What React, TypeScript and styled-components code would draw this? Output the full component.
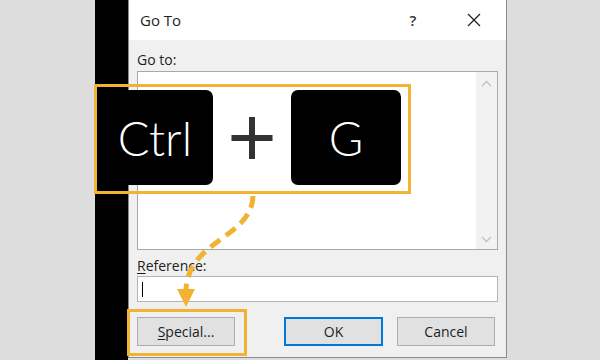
import React from "react";
import styled, { createGlobalStyle } from "styled-components";

const Global = createGlobalStyle`
  html, body { margin: 0; padding: 0; background: #dddddd; }
  * { box-sizing: border-box; }
`;

const ORANGE = "#f2b232";

const Page = styled.div`
  position: relative;
  width: 600px;
  height: 360px;
  overflow: hidden;
  background: #dddddd;
  display: flex;
  font-family: "Open Sans", "Noto Sans", sans-serif;
  color: #1e1e1e;
`;

const Gap = styled.div<{ $w: number }>`
  width: ${(p) => p.$w}px;
  flex: none;
`;

const Band = styled.div`
  width: 33px;
  flex: none;
  background: #000;
`;

const Dialog = styled.div`
  width: 379px;
  height: 358px;
  flex: none;
  border: 1px solid #8a8a8a;
  border-top: none;
  background: #f0f0f0;
  display: flex;
  flex-direction: column;
`;

const TitleBar = styled.div`
  height: 40px;
  background: #fff;
  display: flex;
  align-items: center;
  padding-left: 11px;
  font-size: 15px;
`;

const Title = styled.div`
  flex: 1;
`;

const TitleBtn = styled.div<{ $w: number }>`
  width: ${(p) => p.$w}px;
  display: flex;
  justify-content: center;
  align-items: center;
  font-size: 15px;
  font-weight: 600;
  color: #333;
`;

const Body = styled.div`
  flex: 1;
  padding: 10px 8px 0 8px;
  display: flex;
  flex-direction: column;
`;

const Label = styled.div<{ $mt?: number }>`
  height: 20px;
  line-height: 20px;
  font-size: 14px;
  margin-top: ${(p) => p.$mt ?? 0}px;
`;

const ListBox = styled.div`
  margin-top: 1px;
  height: 179px;
  background: #fff;
  border: 1px solid #a8a8a8;
  display: flex;
  justify-content: flex-end;
`;

const ScrollBar = styled.div`
  width: 21px;
  background: #f2f2f2;
  display: flex;
  flex-direction: column;
  justify-content: space-between;
  align-items: center;
  padding: 8px 0 6px;
`;

const Input = styled.div`
  height: 26px;
  background: #fff;
  border: 1px solid #b4b4b4;
  display: flex;
  align-items: center;
  padding-left: 4px;
`;

const Caret = styled.div`
  width: 1px;
  height: 15px;
  background: #000;
`;

const ButtonRow = styled.div`
  margin-top: 15px;
  display: flex;
  padding-right: 2px;
`;

const Button = styled.div<{ $default?: boolean; $ml?: number }>`
  width: ${(p) => (p.$default ? 99 : 98)}px;
  height: 29px;
  margin-left: ${(p) => p.$ml ?? 0}px;
  background: #e1e1e1;
  border: ${(p) => (p.$default ? "2px solid #0078d7" : "1px solid #adadad")};
  display: flex;
  align-items: center;
  justify-content: center;
  font-size: 14px;
  color: #1e1e1e;
`;

const U = styled.span`
  text-decoration: underline;
  text-underline-offset: 2px;
`;

const Callout = styled.div`
  position: absolute;
  left: 94px;
  top: 84px;
  width: 317px;
  height: 110px;
  border: 3px solid ${ORANGE};
  padding: 3px 7px 6px 0;
  display: flex;
  align-items: stretch;
`;

const Key = styled.div<{ $w: number }>`
  width: ${(p) => p.$w}px;
  background: #000;
  border-radius: 7px;
  color: #fff;
  display: flex;
  align-items: center;
  justify-content: center;
  font-family: "Lato", "DejaVu Sans", sans-serif;
  font-weight: 300;
  font-size: 47px;
  padding-top: 1px;
`;

const Plus = styled.div`
  flex: 1;
  position: relative;
  &::before, &::after {
    content: "";
    position: absolute;
    background: #333;
    left: 50%;
    top: 50%;
    transform: translate(-50%, -50%);
  }
  &::before { width: 41px; height: 6px; }
  &::after { width: 6px; height: 42px; }
`;

const SpecialFrame = styled.div`
  position: absolute;
  left: 127px;
  top: 309px;
  width: 120px;
  height: 47px;
  border: 3px solid ${ORANGE};
`;

const Overlay = styled.svg`
  position: absolute;
  left: 0;
  top: 0;
  width: 600px;
  height: 360px;
  pointer-events: none;
`;

const Chevron = ({ up }: { up?: boolean }) => (
  <svg width="11" height="7" viewBox="0 0 11 7">
    <polyline
      points={up ? "1,6 5.5,1.5 10,6" : "1,1 5.5,5.5 10,1"}
      fill="none"
      stroke="#c2c2c2"
      strokeWidth="1.4"
    />
  </svg>
);

export default function App() {
  return (
    <>
      <Global />
      <Page>
        <Gap $w={95} />
        <Band />
        <Dialog>
          <TitleBar>
            <Title>Go To</Title>
            <TitleBtn $w={58}>?</TitleBtn>
            <TitleBtn $w={64}>
              <svg width="14" height="14" viewBox="0 0 14 14">
                <path d="M1 1 L13 13 M13 1 L1 13" stroke="#222" strokeWidth="1.3" />
              </svg>
            </TitleBtn>
          </TitleBar>
          <Body>
            <Label>Go to:</Label>
            <ListBox>
              <ScrollBar>
                <Chevron up />
                <Chevron />
              </ScrollBar>
            </ListBox>
            <Label $mt={6}>
              <U>R</U>eference:
            </Label>
            <Input>
              <Caret />
            </Input>
            <ButtonRow>
              <Button>
                <span>
                  <U>S</U>pecial...
                </span>
              </Button>
              <Button $default $ml={49}>OK</Button>
              <Button $ml={14}>Cancel</Button>
            </ButtonRow>
          </Body>
        </Dialog>
        <Callout>
          <Key $w={116}>Ctrl</Key>
          <Plus />
          <Key $w={110}>G</Key>
        </Callout>
        <SpecialFrame />
        <Overlay viewBox="0 0 600 360">
          <path
            d="M253 196 C 252 238, 188 240, 186 290"
            fill="none"
            stroke={ORANGE}
            strokeWidth="5"
            strokeDasharray="12 7"
          />
          <polygon points="177,289 195,289 186,307" fill={ORANGE} />
        </Overlay>
      </Page>
    </>
  );
}
